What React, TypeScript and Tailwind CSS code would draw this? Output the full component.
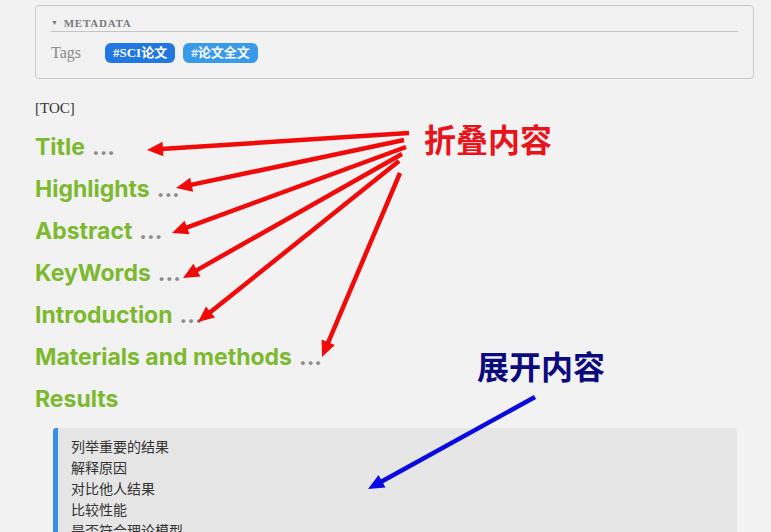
import React from "react";

const HEADINGS = [
  { title: "Title", folded: true },
  { title: "Highlights", folded: true },
  { title: "Abstract", folded: true },
  { title: "KeyWords", folded: true },
  { title: "Introduction", folded: true },
  { title: "Materials and methods", folded: true },
  { title: "Results", folded: false },
];

const RESULT_LINES = ["列举重要的结果", "解释原因", "对比他人结果", "比较性能", "是否符合理论模型"];

// red arrows: [fromX, fromY, tipX, tipY]
const RED_ARROWS: [number, number, number, number][] = [
  [409, 133, 147, 150],
  [404, 140, 176, 188],
  [406, 147, 172, 233],
  [402, 154, 183, 278],
  [399, 161, 198, 322],
  [400, 173, 322, 357],
];

function Arrow({ x1, y1, x2, y2, color, head = 16, width = 4.5 }: { x1: number; y1: number; x2: number; y2: number; color: string; head?: number; width?: number }) {
  const dx = x2 - x1;
  const dy = y2 - y1;
  const len = Math.hypot(dx, dy);
  const ux = dx / len;
  const uy = dy / len;
  const bx = x2 - ux * head;
  const by = y2 - uy * head;
  const px = -uy * (head * 0.45);
  const py = ux * (head * 0.45);
  return (
    <g>
      <line x1={x1} y1={y1} x2={bx + ux * 2} y2={by + uy * 2} stroke={color} strokeWidth={width} />
      <polygon points={`${x2},${y2} ${bx + px},${by + py} ${bx - px},${by - py}`} fill={color} />
    </g>
  );
}

export default function App() {
  return (
    <div className="relative w-[771px] h-[532px] overflow-hidden bg-[#f2f2f2]">
      {/* Metadata */}
      <div className="ml-[35px] mt-[5px] w-[719px] h-[74px] rounded-[4px] border border-[#c9c9c9] px-[15px] pt-[10px] font-['Liberation_Serif','DejaVu_Serif','Noto_Sans_CJK_SC',serif]">
        <div className="flex items-center gap-[5px] border-b border-[#c4c4c4] pb-[1px] text-[11px] leading-[14px] font-bold tracking-[0.07em] text-[#7a7a7a]">
          <span className="text-[7px]">▼</span>
          <span>METADATA</span>
        </div>
        <div className="mt-[9px] flex items-center">
          <span className="w-[54px] text-[16px] text-[#8a8a8a]">Tags</span>
          <span className="rounded-[6px] bg-[#2377e0] px-[8px] py-[2px] text-[13px] font-bold leading-[16px] text-white">#SCI论文</span>
          <span className="ml-[8px] rounded-[6px] bg-[#3a9aea] px-[8px] py-[2px] text-[13px] font-bold leading-[16px] text-white">#论文全文</span>
        </div>
      </div>

      {/* TOC */}
      <div className="ml-[35px] mt-[19px] text-[15px] leading-[20px] text-[#333] font-['Liberation_Serif',serif]">[TOC]</div>

      <div className="mt-[8px] ml-[35px]">
        {HEADINGS.map((h) => (
          <div key={h.title} className="flex h-[42px] items-center text-[23px] font-bold text-[#7db92f] font-['Inter','Noto_Sans',sans-serif]">
            <span>{h.title}</span>
            {h.folded && <span className="ml-[7px] text-[#8c8c8c]">...</span>}
          </div>
        ))}
      </div>

      {/* Results blockquote */}
      <div className="ml-[53px] mt-[8px] w-[684px] rounded-[3px] border-l-[5px] border-[#3a8ee6] bg-[#e6e6e6] pl-[13px] pt-[8px] pb-[10px]">
        {RESULT_LINES.map((l) => (
          <div key={l} className="text-[14px] leading-[21px] text-[#333] font-['Noto_Sans_CJK_SC',sans-serif]">{l}</div>
        ))}
      </div>

      {/* Annotations */}
      <svg className="pointer-events-none absolute left-0 top-0" width={771} height={532}>
        {RED_ARROWS.map(([a, b, c, d], i) => (
          <Arrow key={i} x1={a} y1={b} x2={c} y2={d} color="#f00a0a" />
        ))}
        <Arrow x1={535} y1={397} x2={368} y2={489} color="#0a0ae0" />
      </svg>
      <div className="absolute left-[424px] top-[117px] text-[32px] font-bold leading-[42px] text-[#e8141c] font-['Noto_Sans_CJK_SC',sans-serif]">折叠内容</div>
      <div className="absolute left-[477px] top-[344px] text-[32px] font-bold leading-[42px] text-[#0b0b7e] font-['Noto_Sans_CJK_SC',sans-serif]">展开内容</div>
    </div>
  );
}
